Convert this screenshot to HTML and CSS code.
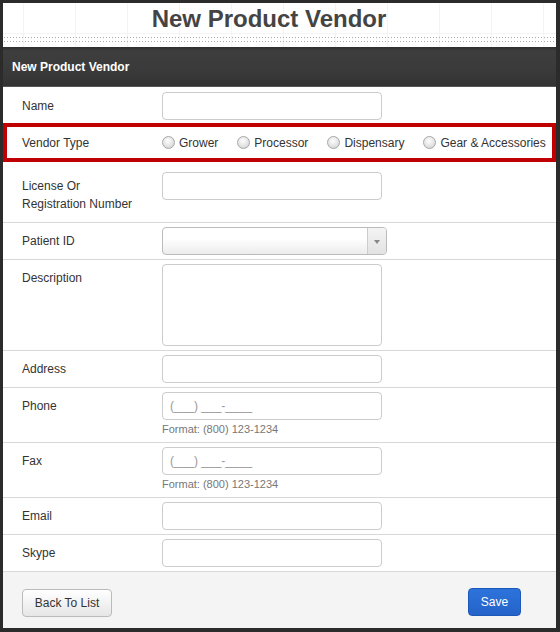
FILE: index.html
```html
<!DOCTYPE html>
<html>
<head>
<meta charset="utf-8">
<link rel="stylesheet" href="styles.css">
</head>
<body>
<div class="frame">
  <div class="page-top">
    <h1 class="page-title">New Product Vendor</h1>
    <div class="dots"></div>
  </div>
  <div class="panel-head">New Product Vendor</div>
  <div class="row row-first">
    <div class="label">Name</div>
    <div class="field"><input class="text" type="text"></div>
  </div>
  <div class="row row-vendor">
    <div class="label">Vendor Type</div>
    <div class="radios">
      <label class="radio"><input type="radio" name="vt"><span>Grower</span></label>
      <label class="radio"><input type="radio" name="vt"><span>Processor</span></label>
      <label class="radio"><input type="radio" name="vt"><span>Dispensary</span></label>
      <label class="radio"><input type="radio" name="vt"><span>Gear &amp; Accessories</span></label>
    </div>
  </div>
  <div class="row row-license">
    <div class="label label-multi">License Or<br>Registration Number</div>
    <div class="field"><input class="text" type="text"></div>
  </div>
  <div class="row">
    <div class="label">Patient ID</div>
    <div class="field">
      <div class="select"><span class="select-arrow"><span class="tri"></span></span></div>
    </div>
  </div>
  <div class="row row-top">
    <div class="label label-top">Description</div>
    <div class="field"><textarea class="area"></textarea></div>
  </div>
  <div class="row">
    <div class="label">Address</div>
    <div class="field"><input class="text" type="text"></div>
  </div>
  <div class="row row-top row-hint">
    <div class="label label-top">Phone</div>
    <div class="field">
      <input class="text" type="text" placeholder="(___) ___-____">
      <div class="hint">Format: (800) 123-1234</div>
    </div>
  </div>
  <div class="row row-top row-hint">
    <div class="label label-top">Fax</div>
    <div class="field">
      <input class="text" type="text" placeholder="(___) ___-____">
      <div class="hint">Format: (800) 123-1234</div>
    </div>
  </div>
  <div class="row">
    <div class="label">Email</div>
    <div class="field"><input class="text" type="text"></div>
  </div>
  <div class="row">
    <div class="label">Skype</div>
    <div class="field"><input class="text" type="text"></div>
  </div>
  <div class="footer">
    <button class="btn btn-back" type="button">Back To List</button>
    <button class="btn btn-save" type="button">Save</button>
  </div>
</div>
</body>
</html>
```

FILE: styles.css
```css
* { box-sizing: border-box; }
html, body { margin: 0; padding: 0; }
body {
  background: #2b2b2b;
  font-family: "Liberation Sans", Arial, sans-serif;
  font-size: 12px;
  color: #333;
  padding: 3px 4px 4px 3px;
  height: 632px;
  overflow: hidden;
}
.frame {
  width: 553px;
  height: 625px;
  background: #fff;
  display: flex;
  flex-direction: column;
}
.page-top {
  height: 44px;
  flex: none;
  padding-top: 2px;
  background-color: #fff;
  background-image:
    linear-gradient(to right, #f4f4f4 1px, transparent 1px),
    linear-gradient(to bottom, #f4f4f4 1px, transparent 1px);
  background-size: 52px 52px;
  background-position: 20px 0, 0 30px;
}
.page-title {
  margin: 0;
  padding-right: 21px;
  text-align: center;
  font-size: 24px;
  line-height: 28px;
  font-weight: bold;
  color: #444;
}
.dots {
  margin-top: 4px;
  height: 5px;
  background-image:
    repeating-linear-gradient(to right, #aaa 0 1px, transparent 1px 3px),
    repeating-linear-gradient(to right, #aaa 0 1px, transparent 1px 3px);
  background-size: 100% 1px, 100% 1px;
  background-position: 1px 0, 1px 4px;
  background-repeat: no-repeat;
}
.panel-head {
  height: 40px;
  flex: none;
  padding-left: 9px;
  display: flex;
  align-items: center;
  color: #fff;
  font-weight: bold;
  font-size: 12px;
  background: linear-gradient(to bottom, #2e2e2e 0, #3e3e3e 4px, #3a3a3a 60%, #333 100%);
  border-bottom: 1px solid #555;
}
.row {
  display: grid;
  flex: none;
  grid-template-columns: 159px 1fr;
  align-items: center;
  padding: 4px 0;
  border-bottom: 1px solid #d8d8d8;
}
.row-top { align-items: start; }
.row-hint { padding-bottom: 6px; }
.row-first {
  padding: 5px 0 3px;
  border-bottom: none;
}
.label {
  padding-left: 19px;
  line-height: 18px;
}
.label-top { padding-top: 5px; }
.row-vendor {
  border: 4px solid #c00000;
  grid-template-columns: 155px 1fr;
  height: 39px;
  padding: 0;
}
.row-vendor .label { padding-left: 15px; }
.row-license {
  align-items: start;
  padding: 10px 0 9px;
}
.label-multi { padding-top: 5px; }
.text {
  display: block;
  width: 220px;
  height: 28px;
  margin: 0;
  border: 1px solid #ccc;
  border-radius: 4px;
  background: #fff;
  padding: 0 7px;
  font-family: "Liberation Sans", Arial, sans-serif;
  font-size: 12px;
  color: #333;
  outline: none;
}
.text::placeholder { color: #999; }
.area {
  display: block;
  width: 220px;
  height: 82px;
  margin: 0;
  border: 1px solid #ccc;
  border-radius: 4px;
  resize: none;
  outline: none;
  font-family: "Liberation Sans", Arial, sans-serif;
}
.hint {
  margin-top: 2px;
  line-height: 14px;
  font-size: 11px;
  color: #777;
}
.select {
  width: 225px;
  height: 28px;
  border: 1px solid #bbb;
  border-radius: 4px;
  background: linear-gradient(to bottom, #fff 0%, #fff 40%, #ececec 100%);
  display: flex;
  justify-content: flex-end;
  overflow: hidden;
}
.select-arrow {
  width: 19px;
  height: 100%;
  border-left: 1px solid #ccc;
  background: linear-gradient(to bottom, #f4f4f4, #e2e2e2);
  display: flex;
  align-items: center;
  justify-content: center;
}
.tri {
  width: 0;
  height: 0;
  border-left: 3px solid transparent;
  border-right: 3px solid transparent;
  border-top: 4px solid #888;
  margin-top: 1px;
}
.radios {
  display: flex;
  align-items: center;
  gap: 19px;
}
.radio {
  display: flex;
  align-items: center;
  gap: 4px;
  line-height: 18px;
  white-space: nowrap;
}
.radio input {
  appearance: none;
  -webkit-appearance: none;
  width: 13px;
  height: 13px;
  margin: 0;
  border: 1px solid #a8a8a8;
  border-radius: 50%;
  background: radial-gradient(circle at 45% 35%, #fdfdfd 0%, #e4e4e4 55%, #c8c8c8 100%);
}
.footer {
  flex: 1;
  background: #f4f4f4;
  display: flex;
  justify-content: space-between;
  align-items: flex-start;
  padding: 16px 35px 0 19px;
}
.btn {
  height: 28px;
  margin: 0;
  font-family: "Liberation Sans", Arial, sans-serif;
  font-size: 12px;
  border-radius: 4px;
  cursor: pointer;
}
.btn-back {
  width: 90px;
  margin-top: 1px;
  border: 1px solid #bbb;
  background: linear-gradient(to bottom, #fff, #e6e6e6);
  color: #333;
}
.btn-save {
  width: 53px;
  border: 1px solid #1c58b8;
  background: linear-gradient(to bottom, #2d73dc, #2563c9);
  color: #fff;
}
```
